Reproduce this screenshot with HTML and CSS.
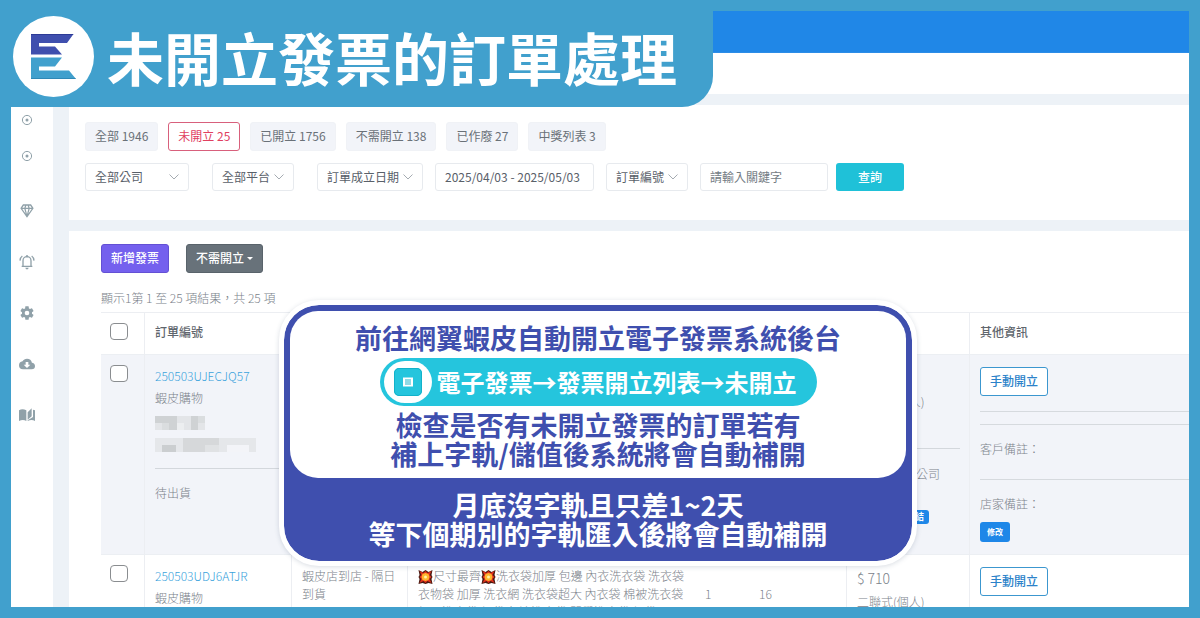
FILE: index.html
```html
<!DOCTYPE html>
<html lang="zh-Hant">
<head>
<meta charset="utf-8">
<title>未開立發票的訂單處理</title>
<link rel="stylesheet" href="styles.css">
</head>
<body>
<div class="frame">
  <div class="screen">
    <div class="topbar"></div>
    <div class="subbar"></div>
    <div class="layout">
      <nav class="sidebar" aria-label="主選單">
        <ul class="sub-menu">
          <li><a href="#" aria-label="子選單一"><svg class="icon" viewBox="0 0 16 16"><circle cx="8" cy="8" r="4.6" fill="none" stroke="currentColor"/><circle cx="8" cy="8" r="1.5" fill="currentColor"/></svg></a></li>
          <li><a href="#" aria-label="子選單二"><svg class="icon" viewBox="0 0 16 16"><circle cx="8" cy="8" r="4.6" fill="none" stroke="currentColor"/><circle cx="8" cy="8" r="1.5" fill="currentColor"/></svg></a></li>
        </ul>
        <ul class="menu">
          <li><a href="#" aria-label="方案"><svg class="icon" viewBox="0 0 24 24"><path fill="currentColor" d="M16 9h3l-5 7M10 9h4l-2 8M5 9h3l2 7M15 4h2l2 3h-3M11 4h2l1 3h-4M7 4h2L8 7H5M6 2L2 8l10 14L22 8l-4-6H6z"/></svg></a></li>
          <li><a href="#" aria-label="通知"><svg class="icon" viewBox="0 0 24 24"><path fill="none" stroke="currentColor" stroke-width="2" d="M4 18.5h16M6 18v-8a6 6 0 0 1 12 0v8M5 3Q2 5 1.500 10M19 3q3 2 3.500 7"/><path fill="currentColor" d="M10.500 2h3v3h-3zM9.500 20.500h5l-1 2.500h-3z"/></svg></a></li>
          <li><a href="#" aria-label="設定"><svg class="icon" viewBox="0 0 24 24"><path fill="currentColor" d="M12 15.500A3.500 3.500 0 0 1 8.500 12 3.500 3.500 0 0 1 12 8.500a3.500 3.500 0 0 1 3.500 3.500 3.500 3.500 0 0 1-3.500 3.500m7.430-2.530c.04-.32.07-.64.07-.97s-.03-.66-.07-1l2.110-1.630c.19-.15.24-.42.12-.64l-2-3.460c-.12-.22-.39-.31-.61-.22l-2.490 1c-.52-.39-1.060-.73-1.690-.98l-.37-2.650A.506.506 0 0 0 14 2h-4c-.25 0-.46.18-.5.42l-.37 2.650c-.63.25-1.170.59-1.690.98l-2.490-1c-.22-.09-.49 0-.61.22l-2 3.460c-.13.22-.07.49.12.64L4.570 11c-.04.34-.07.67-.07 1s.03.65.07.97l-2.110 1.660c-.19.15-.25.42-.12.64l2 3.460c.12.22.39.3.61.22l2.490-1.010c.52.4 1.060.74 1.690.99l.37 2.650c.04.24.25.42.5.42h4c.25 0 .46-.18.5-.42l.37-2.650c.63-.26 1.170-.59 1.690-.99l2.490 1.010c.22.08.49 0 .61-.22l2-3.460c.12-.22.07-.49-.12-.64z"/></svg></a></li>
          <li><a href="#" aria-label="下載"><svg class="icon" viewBox="0 0 24 24"><path fill="currentColor" d="M17 13l-5 5-5-5h3V9h4v4m5.350-2.970A7.490 7.490 0 0 0 12 4C9.110 4 6.600 5.640 5.350 8.030A6.004 6.004 0 0 0 0 14a6 6 0 0 0 6 6h13a5 5 0 0 0 5-5c0-2.640-2.050-4.780-4.650-4.970z"/></svg></a></li>
          <li><a href="#" aria-label="說明"><svg class="icon" viewBox="0 0 24 24"><path fill="currentColor" d="M0 5q5-3 11 0v16q-5-3-11 0zM13 8l6-6v12l-6 5zM21 4l3 1v16q-5-3-11 0l0-1 8-5z"/></svg></a></li>
        </ul>
      </nav>
      <main class="content">
        <section class="card filters">
          <div class="tabs">
            <button class="tab">全部 1946</button>
            <button class="tab tab-active">未開立 25</button>
            <button class="tab">已開立 1756</button>
            <button class="tab">不需開立 138</button>
            <button class="tab">已作廢 27</button>
            <button class="tab">中獎列表 3</button>
          </div>
          <form class="search">
            <div class="scope">
              <select class="field company" aria-label="公司"><option>全部公司</option></select>
              <select class="field short" aria-label="平台"><option>全部平台</option></select>
              <select class="field medium" aria-label="日期類型"><option>訂單成立日期</option></select>
            </div>
            <input class="field range" type="text" value="2025/04/03 - 2025/05/03" aria-label="日期範圍">
            <select class="field short" aria-label="搜尋欄位"><option>訂單編號</option></select>
            <div class="query">
              <input class="field keyword" type="text" placeholder="請輸入關鍵字" aria-label="關鍵字">
              <button class="btn btn-search" type="button">查詢</button>
            </div>
          </form>
        </section>
        <section class="card orders">
          <div class="actions">
            <button class="btn btn-add">新增發票</button>
            <button class="btn btn-skip">不需開立<span class="caret"></span></button>
          </div>
          <p class="summary">顯示1第 1 至 25 項結果，共 25 項</p>
          <table class="table">
            <colgroup>
              <col class="c-check"><col class="c-order"><col class="c-ship"><col class="c-item"><col class="c-qty"><col class="c-num"><col class="c-price"><col>
            </colgroup>
            <thead>
              <tr>
                <th><input class="check" type="checkbox" aria-label="全選"></th>
                <th>訂單編號</th><th></th><th class="open"></th><th class="open"></th><th></th><th></th><th class="open">其他資訊</th>
              </tr>
            </thead>
            <tbody>
              <tr class="shaded">
                <td><input class="check" type="checkbox" aria-label="250503UJECJQ57"></td>
                <td class="order">
                  <a href="#">250503UJECJQ57</a>
                  <p>蝦皮購物</p>
                  <svg class="mosaic" width="101" height="37" viewBox="0 0 101 37">
                    <path fill="#e3e5e8" d="M0 0h50v14H0z"/><path fill="#cfd2d4" d="M0 0h14v7H0zM14 0h8v14h-8zM36 0h7v14h-7z"/><path fill="#dadddf" d="M7 7h7v7H7zM43 0h7v7h-7z"/><path fill="#eceef0" d="M22 7h7v7h-7z"/>
                    <path fill="#e5e7ea" d="M0 22h101v14H0z"/><path fill="#d6d8da" d="M28 22h36v14H28z"/><path fill="#cbced0" d="M7 29h14v7H7z"/><path fill="#f3f4f8" d="M72 29h22v7H72z"/><path fill="#e0e2e4" d="M50 29h14v7H50z"/>
                  </svg>
                  <hr>
                  <p>待出貨</p>
                </td>
                <td></td><td class="open"></td><td class="open"></td><td></td>
                <td class="price">
                  <p class="amount"></p>
                  <p>二聯式(個人)</p>
                  <hr>
                  <p class="right">公司</p>
                  <div class="tag-row"><span class="tag">連結</span></div>
                </td>
                <td class="open info">
                  <button class="btn btn-issue">手動開立</button>
                  <hr><hr>
                  <p>客戶備註：</p>
                  <hr>
                  <p>店家備註：</p>
                  <button class="btn btn-edit">修改</button>
                </td>
              </tr>
              <tr>
                <td><input class="check" type="checkbox" aria-label="250503UDJ6ATJR"></td>
                <td class="order">
                  <a href="#">250503UDJ6ATJR</a>
                  <p>蝦皮購物</p>
                </td>
                <td class="dense">蝦皮店到店 - 隔日到貨</td>
                <td class="dense open item"><svg class="boom" viewBox="0 0 14 14"><path fill="#4a1a12" d="M0 0l4 2 3-2 3 2 4-2-1 5 1 2-1 2 1 5-4-1-3 1-3-1-4 1 1-5-1-2 1-2z"/><path fill="#e5301c" d="M1 1l4 2 2-2 2 2 4-2-2 4 2 2-2 2 2 4-4-2-2 2-2-2-4 2 2-4-2-2 2-2z"/><path fill="#ffb52e" d="M4 4l3-1 3 1 1 3-1 3-3 1-3-1-1-3z"/><circle cx="7" cy="7" r="1.500" fill="#fff3a8"/></svg>尺寸最齊<svg class="boom" viewBox="0 0 14 14"><path fill="#4a1a12" d="M0 0l4 2 3-2 3 2 4-2-1 5 1 2-1 2 1 5-4-1-3 1-3-1-4 1 1-5-1-2 1-2z"/><path fill="#e5301c" d="M1 1l4 2 2-2 2 2 4-2-2 4 2 2-2 2 2 4-4-2-2 2-2-2-4 2 2-4-2-2 2-2z"/><path fill="#ffb52e" d="M4 4l3-1 3 1 1 3-1 3-3 1-3-1-1-3z"/><circle cx="7" cy="7" r="1.500" fill="#fff3a8"/></svg>洗衣袋加厚 包邊 內衣洗衣袋 洗衣袋 衣物袋 加厚 洗衣網 洗衣袋超大 內衣袋 棉被洗衣袋 加厚洗衣袋 網袋 包邊洗衣袋 開學洗衣袋 網袋</td>
                <td class="open count">1</td>
                <td class="count">16</td>
                <td class="price">
                  <p class="amount">$ 710</p>
                  <p>二聯式(個人)</p>
                </td>
                <td class="open info"><button class="btn btn-issue">手動開立</button></td>
              </tr>
            </tbody>
          </table>
        </section>
      </main>
    </div>
  </div>
</div>

<header class="banner">
  <svg class="logo" viewBox="0 0 81 81" role="img" aria-label="標誌">
    <circle cx="40.500" cy="40.500" r="40.500" fill="#fff"/>
    <path fill="#3f4fae" d="M18 18h42.500l-6.500 9H26v3.500h16l7 8H18z"/>
    <path fill="#41a0cd" d="M18 41.500h31l-7 9H26v4h30l7 8.500H18z"/>
    <path fill="#2d3b96" d="M18 18h42.500l-1 1H18z"/>
    <path fill="#2f88b6" d="M18 62h44l1 1H18z"/>
  </svg>
  <h1>未開立發票的訂單處理</h1>
</header>

<aside class="notice">
  <div class="notice-main">
    <p>前往網翼蝦皮自動開立電子發票系統後台</p>
    <div class="path">
      <span class="path-icon"><svg viewBox="0 0 28 28"><rect width="28" height="28" rx="5" fill="#25c5dd"/><rect x=".5" y=".5" width="27" height="27" rx="4.500" fill="none" stroke="#12b2ca"/><path fill="#fff" d="M9 9.500h10v9H9z"/><path stroke="#25b5cb" d="M11 12h6M11 14h6M11 16h6"/></svg></span>
      <span class="path-text">電子發票→發票開立列表→未開立</span>
    </div>
    <p>檢查是否有未開立發票的訂單若有<br>補上字軌/儲值後系統將會自動補開</p>
  </div>
  <p class="notice-foot">月底沒字軌且只差1~2天<br>等下個期別的字軌匯入後將會自動補開</p>
</aside>
</body>
</html>
```
FILE: styles.css
```css
* { box-sizing: border-box; }
body, p, h1, ul { margin: 0; padding: 0; }
ul { list-style: none; }
body {
  font: 12px/22px "Noto Sans CJK TC", sans-serif;
  color: #7b828a;
  background: #41a0cd;
}
button, input, select { font: inherit; margin: 0; }
a { color: #3ba3dc; text-decoration: none; }

.frame { height: 100vh; padding: 11px; position: relative; }
.screen {
  height: 100%;
  overflow: hidden;
  display: flex;
  flex-direction: column;
  background: #edf2f7;
}
.topbar { flex: none; height: 42px; background: #2087e7; }
.subbar { flex: none; height: 41px; background: #fff; box-shadow: 0 1px 2px #dce3ea; }
.layout { flex: 1; min-height: 0; display: flex; }

.sidebar { flex: none; width: 42px; padding: 8px 0 0 8px; background: #fff; }
.sidebar a { display: flex; align-items: center; height: 100%; color: #90a1a9; }
.sub-menu { margin-bottom: 11px; }
.sub-menu li { height: 36px; }
.menu li { height: 51px; }
.icon { width: 16px; height: 16px; }

.content { flex: 1; min-width: 0; display: flex; flex-direction: column; gap: 11px; padding: 11px 0 0 16px; background: #edf2f7; }
.card { background: #fff; }
.filters { display: flex; flex-direction: column; gap: 12px; padding: 17px 16px 29px; }
.tabs { display: flex; gap: 10px; }
.tab {
  height: 29px;
  padding: 0 9px 2px;
  border: 1px solid #f0f2f6;
  border-radius: 3px;
  background: #f2f4f9;
  color: #6a7178;
  white-space: nowrap;
}
.tab-active { background: #fff; border-color: #d8607c; color: #e0405f; }
.search { display: flex; gap: 12px; }
.scope { display: flex; gap: 23px; }
.query { display: flex; gap: 8px; }
.field {
  height: 28px;
  padding: 0 9px 1px;
  border: 1px solid #e7eaee;
  border-radius: 3px;
  background-color: #fff;
  color: #596069;
}
select.field {
  appearance: none;
  padding-right: 0;
  background-image: url("data:image/svg+xml,%3Csvg xmlns='http://www.w3.org/2000/svg' width='10' height='6'%3E%3Cpath d='M.5.5L5 5 9.5.5' fill='none' stroke='%23a5abb1'/%3E%3C/svg%3E");
  background-repeat: no-repeat;
  background-position: right 9px center;
}
input.field { padding-bottom: 2px; }
.field::placeholder { color: #747c84; opacity: 1; }
.company { width: 104px; }
.short { width: 82px; }
.medium { width: 106px; }
.range { width: 159px; }
.keyword { width: 128px; }
.btn { border: 1px solid transparent; border-radius: 3px; color: #fff; font-weight: 500; padding: 0; white-space: nowrap; }
.btn-search { width: 68px; background: #1fc1d8; }

.orders { flex: 1; padding: 13px 0 0 32px; }
.actions { display: flex; gap: 17px; }
.btn-add, .btn-skip { height: 29px; padding: 0 9px 2px; }
.btn-add { background: #7460ee; border-color: #6350d4; }
.btn-skip { background: #68727a; border-color: #59636b; }
.caret { display: inline-block; margin-left: 3px; vertical-align: 3px; border: 3px solid transparent; border-top-color: #fff; border-bottom: 0; }
.summary { margin: 14px 0 3px; font-weight: 300; }

.table { width: 100%; table-layout: fixed; border-collapse: separate; border-spacing: 0; font-weight: 300; }
.c-check { width: 44px; }
.c-order { width: 147px; }
.c-ship { width: 116px; }
.c-item { width: 287px; }
.c-qty { width: 54px; }
.c-num { width: 98px; }
.c-price { width: 123px; }
.table th, .table td { text-align: left; vertical-align: top; padding: 10px 9px 0; border-right: 1px solid #eceef2; }
.table th { height: 42px; padding-top: 8px; font-weight: 500; color: #5f666d; border-top: 1px solid #eceef2; }
.table .open { border-right: 0; }
.table td { border-top: 1px solid #eceff3; }
.shaded td { height: 200px; background: #f2f4f9; }
.check {
  appearance: none;
  display: block;
  width: 18px;
  height: 17px;
  border: 1px solid #8a8d90;
  border-radius: 4px;
  background: #fff;
}
.table th:first-child { padding-top: 10px; }
.table .order, .table th:nth-child(2) { padding-left: 10px; }
.table .dense, .table .count, .table .price, .table .info, .table th:last-child { padding-left: 10px; }
hr { margin: 0; border: 0; border-top: 1px solid #d3d7dc; }
.order a { display: block; }
.mosaic { display: block; margin: 7px 0 15px; }
.order hr { margin-bottom: 13px; }
.table .dense { line-height: 18px; padding-top: 12px; }
.table .item { padding-right: 0; }
.boom { width: 15px; height: 14px; vertical-align: -3px; }
.table .count { padding-top: 28px; }
.amount { font-size: 14px; height: 24px; }
.table .price { padding-top: 12px; }
.price hr { margin: 35px 0 14px; }
.right { text-align: right; padding-right: 20px; }
.tag-row { display: flex; justify-content: flex-end; padding: 25px 31px 0 0; }
.tag { padding: 0 5px; border-radius: 3px; background: #1e87e8; color: #fff; font-size: 9px; font-weight: 700; line-height: 14px; }
.table .info { padding-top: 12px; padding-right: 0; }
.btn-issue { display: block; height: 29px; padding: 0 9px 1px; background: #fff; border-color: #3c97cf; color: #2b82c9; }
.info hr { margin-top: 15px; border-top: 1px solid #d6dade; }
.info hr + hr { margin-top: 12px; }
.info p { padding-top: 13px; }
.info p + hr { margin-top: 19px; }
.btn-edit { display: block; width: 30px; height: 20px; margin-top: 7px; background: #1e87e8; font-size: 8px; line-height: 16px; font-weight: 700; }

.banner {
  position: absolute;
  top: 0;
  left: 0;
  display: flex;
  align-items: center;
  gap: 13px;
  height: 107px;
  padding: 5px 36px 0 13px;
  border-bottom-right-radius: 31px;
  background: #41a0cd;
}
.logo { width: 81px; height: 81px; }
.banner h1 { font-size: 57px; line-height: 84px; font-weight: 700; color: #fff; white-space: nowrap; }

.notice {
  position: absolute;
  top: 300px;
  left: calc(50% - 2px);
  width: 638px;
  transform: translateX(-50%);
  padding: 6px;
  border: 5px solid #fff;
  border-radius: 40px;
  background: #3f4fae;
  background-clip: padding-box;
  box-shadow: 0 1px 5px rgba(60, 80, 110, .2);
  font-size: 27px;
  line-height: 29px;
  font-weight: 700;
  text-align: center;
  white-space: nowrap;
}
.notice-main { padding: 12px 0 10px; border-radius: 28px; background: #fff; color: #3f4fae; }
.path {
  display: flex;
  align-items: center;
  gap: 5px;
  width: fit-content;
  height: 48px;
  margin: 6px auto 4px;
  padding: 0 20px 0 4px;
  border-radius: 24px;
  background: #25c5dd;
  color: #fff;
  font-size: 24px;
}
.path-icon { display: grid; place-items: center; width: 48px; height: 42px; border-radius: 21px; background: #fff; }
.path-icon svg { width: 28px; height: 28px; }
.path-text { padding-bottom: 2px; }
.notice-foot { padding: 12px 0 7px; color: #fff; }
```
